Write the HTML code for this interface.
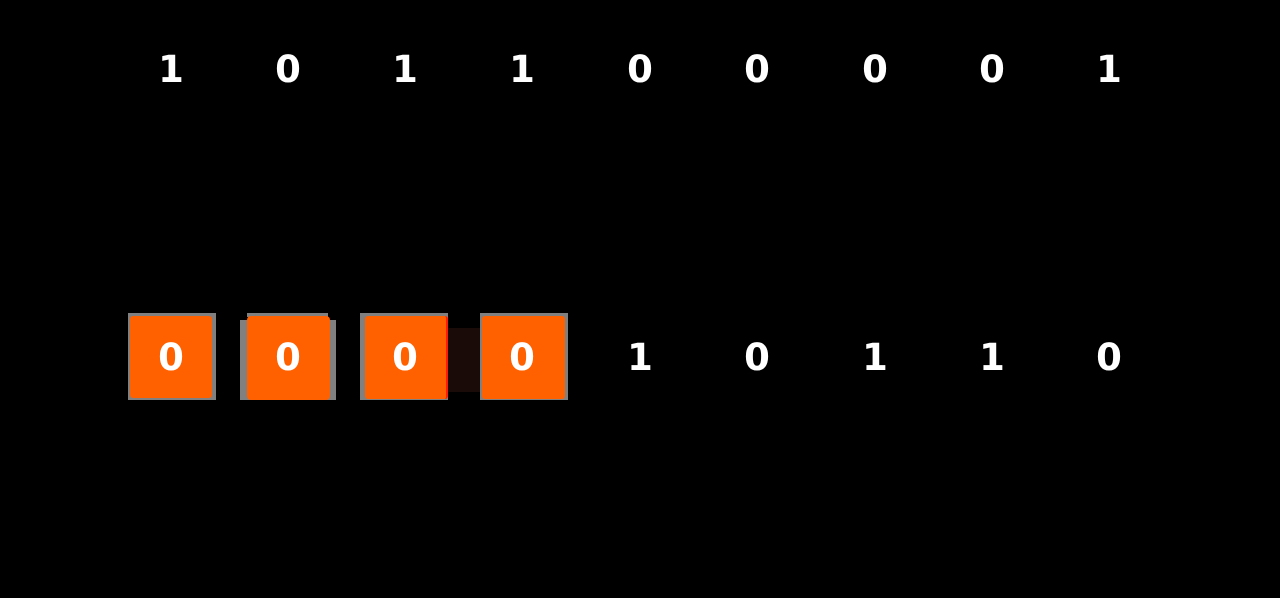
<!DOCTYPE html>
<html><head><style>
html,body{margin:0;padding:0;background:#000;width:1280px;height:598px;overflow:hidden;position:relative;font-family:"DejaVu Sans",sans-serif;}
.d{position:absolute;width:80px;margin-left:-40px;text-align:center;color:#fff;font-weight:bold;font-size:37px;line-height:40px;}
.b{position:absolute;}
</style></head><body>
<div class="b" style="left:128px;top:313px;width:88px;height:87px;background:#808080"></div>
<div class="b" style="left:130px;top:316px;width:82px;height:82px;background:#ff6000;border-radius:3px"></div>
<div class="b" style="left:240px;top:320px;width:96px;height:80px;background:#808080"></div>
<div class="b" style="left:247px;top:313px;width:81px;height:4px;background:#808080"></div>
<div class="b" style="left:247px;top:316px;width:83px;height:84px;background:#ff6000;border-radius:4px"></div>
<div class="b" style="left:360px;top:313px;width:88px;height:87px;background:#808080"></div>
<div class="b" style="left:365px;top:316px;width:81px;height:83px;background:#ff6000;border-radius:3px;border-right:2px solid #ff1a00"></div>
<div class="b" style="left:448px;top:328px;width:32px;height:64px;background:#1a0a08"></div>
<div class="b" style="left:480px;top:313px;width:88px;height:87px;background:#808080"></div>
<div class="b" style="left:482px;top:316px;width:83px;height:83px;background:#ff6000;border-radius:3px"></div>

<div class="d" style="left:171px;top:50px">1</div>
<div class="d" style="left:288px;top:50px">0</div>
<div class="d" style="left:405px;top:50px">1</div>
<div class="d" style="left:522px;top:50px">1</div>
<div class="d" style="left:640px;top:50px">0</div>
<div class="d" style="left:757px;top:50px">0</div>
<div class="d" style="left:875px;top:50px">0</div>
<div class="d" style="left:992px;top:50px">0</div>
<div class="d" style="left:1109px;top:50px">1</div>

<div class="d" style="left:171px;top:338px">0</div>
<div class="d" style="left:288px;top:338px">0</div>
<div class="d" style="left:405px;top:338px">0</div>
<div class="d" style="left:522px;top:338px">0</div>
<div class="d" style="left:640px;top:338px">1</div>
<div class="d" style="left:757px;top:338px">0</div>
<div class="d" style="left:875px;top:338px">1</div>
<div class="d" style="left:992px;top:338px">1</div>
<div class="d" style="left:1109px;top:338px">0</div>
</body></html>
